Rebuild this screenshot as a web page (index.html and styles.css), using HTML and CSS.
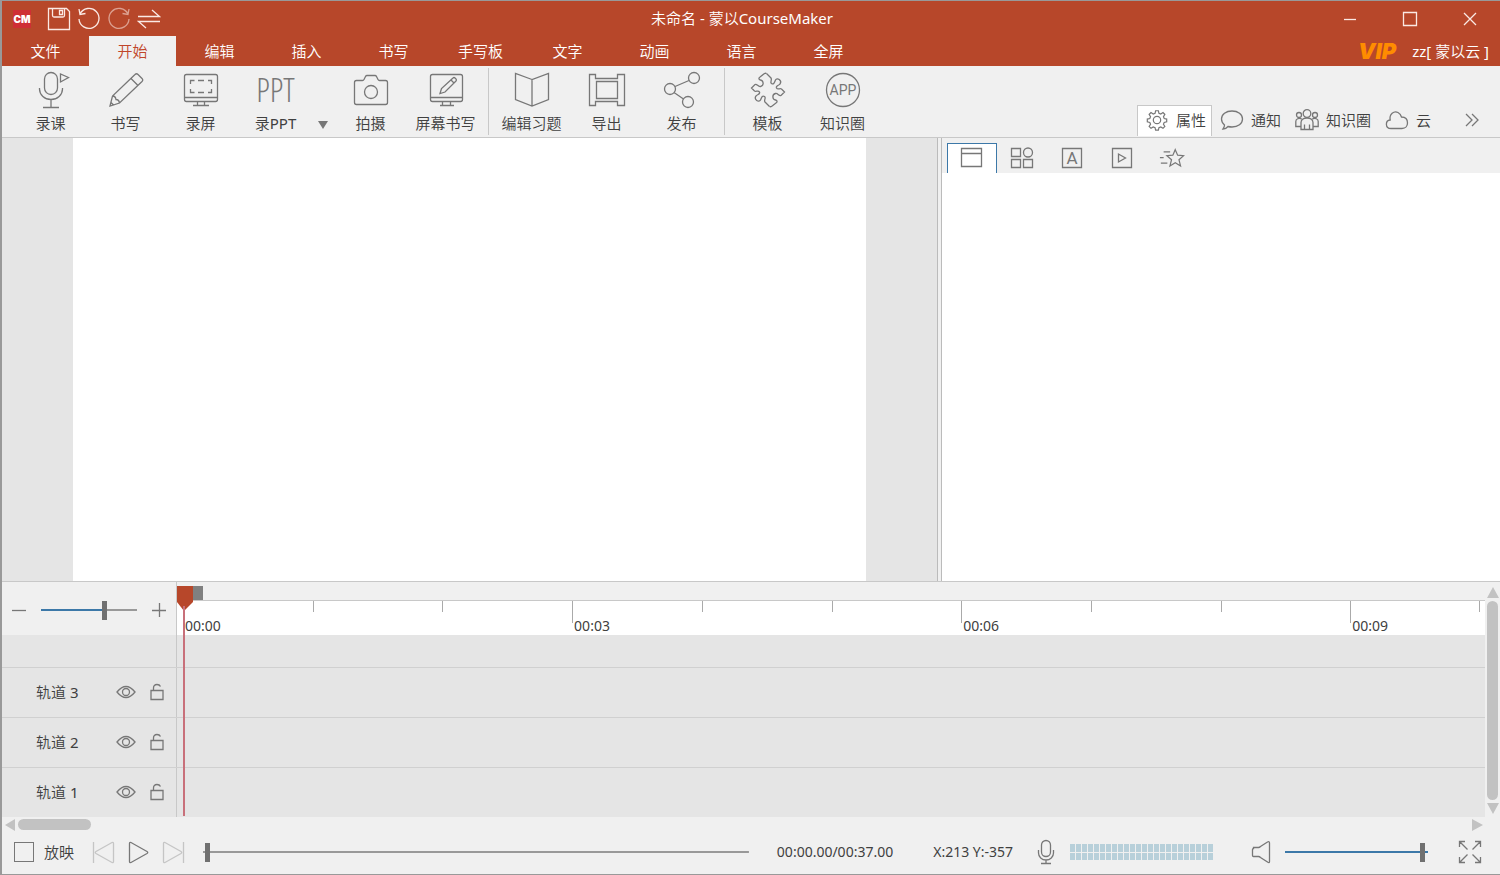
FILE: index.html
```html
<!DOCTYPE html>
<html lang="zh-CN">
<head>
<meta charset="utf-8">
<title>未命名 - 蒙以CourseMaker</title>
<link rel="stylesheet" href="styles.css">
</head>
<body>
<div class="app">
  <header class="titlebar">
    <div class="quick">
      <span class="logo">CM</span>
      <button aria-label="保存"><svg width="24" height="24" viewBox="0 0 24 24"><path d="M1.500 1.500h18l3 3v18h-21zM5.500 1.500v7q0 1.500 1.500 1.500h9q1.500 0 1.500-1.500v-7M12.500 3.500h3v4h-3z"/></svg></button>
      <button aria-label="撤销"><svg width="24" height="24" viewBox="0 0 24 24"><path d="M3 7a10 10 0 1 1-1 5M2 2l1 5.500 5.500-1"/></svg></button>
      <button aria-label="重做" class="dim"><svg width="24" height="24" viewBox="0 0 24 24"><path d="M21 7a10 10 0 1 0 1 5M22 2l-1 5.500-5.500-1"/></svg></button>
      <button aria-label="切换"><svg width="24" height="24" viewBox="0 0 24 24"><path d="M1 9.500h21.500L15 3M23 14.500H1.500L9 21"/></svg></button>
    </div>
    <h1 class="title">未命名 - 蒙以CourseMaker</h1>
    <div class="winctl">
      <button aria-label="最小化"><svg width="16" height="16" viewBox="0 0 16 16"><path d="M2 8.500h12"/></svg></button>
      <button aria-label="最大化"><svg width="16" height="16" viewBox="0 0 16 16"><path d="M1.500 1.500h13v13h-13z"/></svg></button>
      <button aria-label="关闭"><svg width="16" height="16" viewBox="0 0 16 16"><path d="M2 2l12 12M14 2L2 14"/></svg></button>
    </div>
  </header>
  <nav class="menu">
    <button>文件</button><button class="active">开始</button><button>编辑</button><button>插入</button><button>书写</button><button>手写板</button><button>文字</button><button>动画</button><button>语言</button><button>全屏</button>
    <div class="account"><span class="vip">VIP</span><a href="#account">zz[ 蒙以云 ]</a></div>
  </nav>
  <div class="ribbon">
    <div class="tools">
      <button class="tool"><svg width="40" height="40" viewBox="0 0 40 40"><rect x="13.500" y="2.500" width="13" height="22" rx="6.500"/><path d="M8.500 18v1a11.500 10.500 0 0 0 23 0v-1M20 29.500v8M12 37.500h16M29.500 4v8l8-4.500z"/></svg>录课</button>
      <button class="tool"><svg width="40" height="40" viewBox="0 0 40 40"><path d="M4 36l2.500-10L29 4.500q1.500-1.500 3 0l4 4q1.500 1.500 0 3L13.500 33zM25 8.500l7 7M6.500 26q3 0 3.500 3.500q3 0 3.500 3.500M4 36l3.500-1-2.500-2.500"/></svg>书写</button>
      <button class="tool"><svg width="40" height="40" viewBox="0 0 40 40"><rect x="3.500" y="4.500" width="33" height="27" rx="2"/><path d="M3.500 27.500h33M16.500 31.500v3.500M23.500 31.500v3.500M12 35.500h16M9.500 14v-3.500h4M17 10.500h6M27 10.500h3.500V14M9.500 19v3.500h4M17 22.500h6M27 22.500h3.500V19"/></svg>录屏</button>
      <button class="tool"><span class="ppt" aria-hidden="true">PPT</span>录PPT</button>
      <button class="drop" aria-label="录PPT选项"><svg width="10" height="8" viewBox="0 0 10 8"><path d="M0 0h10L5 8z"/></svg></button>
      <button class="tool"><svg width="40" height="40" viewBox="0 0 40 40"><path d="M5.500 10.500h6q1 0 1.500-1l1.500-3q.5-1 1.500-1h8q1 0 1.500 1l1.500 3q.5 1 1.500 1h6q2 0 2 2v20q0 2-2 2h-29q-2 0-2-2v-20q0-2 2-2z"/><circle cx="20" cy="22" r="6.500"/></svg>拍摄</button>
      <button class="tool"><svg width="40" height="40" viewBox="0 0 40 40"><rect x="4.500" y="4.500" width="32" height="27" rx="2"/><path d="M4.500 27.500h32M16.500 31.500v3.500M24.500 31.500v3.500M14 35.500h14M14 23.500l1.500-5L27 8q1-1 2 0l1 1q1 1 0 2L19 22zM25 10l3 3"/></svg>屏幕书写</button>
      <span class="sep"></span>
      <button class="tool"><svg width="40" height="40" viewBox="0 0 40 40"><path d="M20 9.500L3.500 3.500v26L20 36l16.500-6.500v-26zV36"/></svg>编辑习题</button>
      <button class="tool"><svg width="40" height="40" viewBox="0 0 40 40"><path d="M2.500 4.500h6v4h22v-4h7v31h-7v-4h-22v4h-6z"/><path d="M9.500 11.500h21v17h-21z"/></svg>导出</button>
      <button class="tool"><svg width="40" height="40" viewBox="0 0 40 40"><circle cx="8" cy="19" r="5.500"/><circle cx="32" cy="8" r="5.500"/><circle cx="26" cy="32" r="5.500"/><path d="M13 16.500l14-6M12 22.500l9.500 6.500"/></svg>发布</button>
      <span class="sep"></span>
      <button class="tool"><svg width="40" height="40" viewBox="0 0 40 40"><path d="M18.500 3.500l4.500 4.500c1.500 2-1.500 4 .5 5.500c2.500 1.500 3-1.500 4-3.500c1.500-3 7 .5 4.500 4c-1 1.500-4.500 1.500-3.500 4c1 2 3.500 0 5 1l3 3l-3.500 3.500c-2 1-3-2.500-5.500-2c-4 1-3 6 0 6.500c2 .5 2 2 .5 3l-4.500 3.500q-1 .5-2 0"/><path transform="rotate(180 20 20)" d="M18.500 3.500l4.500 4.500c1.500 2-1.500 4 .5 5.500c2.500 1.500 3-1.500 4-3.500c1.500-3 7 .5 4.500 4c-1 1.500-4.500 1.500-3.500 4c1 2 3.500 0 5 1l3 3l-3.500 3.500c-2 1-3-2.500-5.500-2c-4 1-3 6 0 6.500c2 .5 2 2 .5 3l-4.500 3.500q-1 .5-2 0"/></svg>模板</button>
      <button class="tool"><svg width="40" height="40" viewBox="0 0 40 40"><circle cx="20" cy="20" r="16.500"/><text x="20" y="25" text-anchor="middle">APP</text></svg>知识圈</button>
    </div>
    <div class="panes">
      <button class="active"><svg width="24" height="24" viewBox="-1 -1 26 26"><circle cx="12" cy="12" r="4"/><path d="M10.500 2h3l.6 2.700 2 .8L18.500 4l2 2-1.500 2.400.8 2 2.700.6v3l-2.700.6-.8 2 1.500 2.400-2 2-2.400-1.500-2 .8-.6 2.700h-3l-.6-2.700-2-.8L5.500 21l-2-2L5 16.600l-.8-2-2.700-.6v-3l2.700-.6.8-2L3.500 6l2-2 2.400 1.500 2-.8z"/></svg>属性</button>
      <button><svg width="24" height="24" viewBox="0 0 24 24"><path d="M12 3c6 0 10.500 3.300 10.500 8S18 19 12 19q-2 0-4-.5-2 2.500-5 2.500 1.500-2 1.500-4-3-2.500-3-6C1.500 6.300 6 3 12 3z"/></svg>通知</button>
      <button><svg width="24" height="24" viewBox="0 0 24 24"><circle cx="12" cy="5.500" r="3.800"/><circle cx="4" cy="7" r="2.500"/><circle cx="20" cy="7" r="2.500"/><path d="M6 21.500v-7c0-3 3-4.500 6-4.500s6 1.500 6 4.500v7zM9.500 16.500v5M14.500 16.500v5M6 18.500H.8v-5c0-2.500 3-4 6-2.500M18 18.500h5.200v-5c0-2.500-3-4-6-2.500"/></svg>知识圈</button>
      <button><svg width="24" height="24" viewBox="0 0 24 24"><path d="M6 20.500c-6 0-6-8-.8-8.500C4 6 9 2.500 13 4.500c2 1 3 2.500 3.500 4.500C21 9 22.500 12 22.500 15s-2 5.500-5.500 5.500z"/></svg>云</button>
      <button class="more" aria-label="更多"><svg width="16" height="16" viewBox="0 0 16 16"><path d="M2 2l6 6-6 6M8 2l6 6-6 6"/></svg></button>
    </div>
  </div>
  <main class="work">
    <section class="stage" aria-label="画布"><div class="page"></div></section>
    <div class="splitter"></div>
    <aside class="props">
      <div class="proptabs">
        <button class="active" aria-label="页面"><svg width="24" height="24" viewBox="0 0 24 24"><path d="M1.500 2.500h20v18h-20zM1.500 7.500h20"/></svg></button>
        <button aria-label="组件"><svg width="24" height="24" viewBox="0 0 24 24"><path d="M1.500 2.500h9v8h-9zM1.500 13.500h9v8h-9zM13.500 13.500h9v8h-9z"/><circle cx="18" cy="6.500" r="4.500"/></svg></button>
        <button aria-label="文字"><svg width="24" height="24" viewBox="0 0 24 24"><path d="M2.500 2.500h19v19h-19z"/><text x="12" y="18" text-anchor="middle" class="glyph">A</text></svg></button>
        <button aria-label="媒体"><svg width="24" height="24" viewBox="0 0 24 24"><path d="M2.500 2.500h19v19h-19zM8.500 8v8l7-4z"/></svg></button>
        <button aria-label="动效"><svg width="26" height="24" viewBox="0 0 28 24"><path d="M17.500 3l2.600 6 6.400.5-5 4.300 1.700 6.700-5.700-3.500-5.700 3.500 1.700-6.700-5-4.300 6.400-.5zM5 5.500h7M1 11.500h4M2 17.500h7"/></svg></button>
      </div>
      <div class="propbody"></div>
    </aside>
  </main>
  <section class="timeline" aria-label="时间轴">
    <div class="lanes">
      <div class="row head">
        <div class="zoomer">
          <button aria-label="缩小"><svg width="14" height="14" viewBox="0 0 14 14"><path d="M0 7.500h14"/></svg></button>
          <input type="range" class="slider" aria-label="缩放" min="0" max="100" value="67" style="--fill:67%">
          <button aria-label="放大"><svg width="14" height="14" viewBox="0 0 14 14"><path d="M0 7.500h14M7.500 0v14"/></svg></button>
        </div>
        <div class="ruler"><div class="scale">
          <span class="cell origin">00:00</span><span class="cell"></span><span class="cell"></span>
          <span class="cell major">00:03</span><span class="cell"></span><span class="cell"></span>
          <span class="cell major">00:06</span><span class="cell"></span><span class="cell"></span>
          <span class="cell major last">00:09</span>
        </div></div>
      </div>
      <div class="row blank"><div class="label"></div><div class="lane"></div></div>
      <div class="row"><div class="label"><span>轨道 3</span><button aria-label="显示轨道 3"><svg width="20" height="14" viewBox="0 0 20 14"><path d="M1 7q9-11 18 0q-9 11-18 0z"/><circle cx="10" cy="7" r="3.500"/></svg></button><button aria-label="锁定轨道 3"><svg width="14" height="18" viewBox="0 0 14 18"><path d="M1 7.500h12v9H1zM3.500 7.500V5q0-3.500 3.500-3.500 2.500 0 3.500 2"/></svg></button></div><div class="lane"></div></div>
      <div class="row"><div class="label"><span>轨道 2</span><button aria-label="显示轨道 2"><svg width="20" height="14" viewBox="0 0 20 14"><path d="M1 7q9-11 18 0q-9 11-18 0z"/><circle cx="10" cy="7" r="3.500"/></svg></button><button aria-label="锁定轨道 2"><svg width="14" height="18" viewBox="0 0 14 18"><path d="M1 7.500h12v9H1zM3.500 7.500V5q0-3.500 3.500-3.500 2.500 0 3.500 2"/></svg></button></div><div class="lane"></div></div>
      <div class="row final"><div class="label"><span>轨道 1</span><button aria-label="显示轨道 1"><svg width="20" height="14" viewBox="0 0 20 14"><path d="M1 7q9-11 18 0q-9 11-18 0z"/><circle cx="10" cy="7" r="3.500"/></svg></button><button aria-label="锁定轨道 1"><svg width="14" height="18" viewBox="0 0 14 18"><path d="M1 7.500h12v9H1zM3.500 7.500V5q0-3.500 3.500-3.500 2.500 0 3.500 2"/></svg></button></div><div class="lane"></div></div>
      <div class="playhead"><svg width="26" height="26" viewBox="0 0 26 26"><path class="end" d="M16 0h10v14H16z"/><path class="now" d="M0 0h16v16l-9 9-7-9z"/></svg></div>
    </div>
    <div class="vscroll"><i class="up"></i><span class="thumb"></span><i class="down"></i></div>
  </section>
  <div class="hscroll"><i class="left"></i><span class="thumb"></span><i class="right"></i></div>
  <footer class="player">
    <label class="show"><input type="checkbox">放映</label>
    <div class="transport">
      <button aria-label="上一个" class="off"><svg width="24" height="24" viewBox="0 0 24 24"><path d="M2.500 2v21M22.500 3.500v18q0 1.500-1.500 1L5 13.500q-1.500-1 0-2l16-9q1.500-.5 1.500 1z"/></svg></button>
      <button aria-label="播放"><svg width="24" height="24" viewBox="0 0 24 24"><path d="M3.500 3.500v18q0 1.500 1.500 1l16-9q1.500-1 0-2L5 2.500q-1.500-.5-1.500 1z"/></svg></button>
      <button aria-label="下一个" class="off"><svg width="24" height="24" viewBox="0 0 24 24"><path d="M22.500 2v21M2.500 3.500v18q0 1.500 1.500 1l16-9q1.500-1 0-2L4 2.500q-1.500-.5-1.500 1z"/></svg></button>
    </div>
    <input type="range" class="slider seek" aria-label="播放进度" min="0" max="100" value="0" style="--fill:0%">
    <span class="time">00:00.00/00:37.00</span>
    <span class="coords">X:213 Y:-357</span>
    <button aria-label="麦克风"><svg width="18" height="26" viewBox="0 0 18 26"><rect x="4.500" y="1.500" width="9" height="16" rx="4.500"/><path d="M1.500 11v3a7.500 7 0 0 0 15 0v-3M9 21v3.500M4 24.500h10"/></svg></button>
    <div class="meter" role="img" aria-label="音量电平"></div>
    <button class="speaker" aria-label="静音"><svg width="20" height="24" viewBox="0 0 20 24"><path d="M2.500 7.500h5q1 0 2-1l7-4.500q2-1 2 1v18.500q0 2-2 .5l-7-4.500q-1-1-2-1h-5q-1 0-1-1v-6q0-1 1-1z"/></svg></button>
    <input type="range" class="slider volume" aria-label="音量" min="0" max="100" value="98" style="--fill:100%">
    <button aria-label="全屏显示"><svg width="24" height="24" viewBox="0 0 24 24"><path d="M1.500 7V1.500H7M1.500 1.500l8 8M17 1.500h5.500V7M22.500 1.500l-8 8M1.500 17v5.500H7M1.500 22.500l8-8M17 22.500h5.500V17M22.500 22.500l-8-8"/></svg></button>
  </footer>
</div>
</body>
</html>
```
FILE: styles.css
```css
* { box-sizing: border-box; }
body { margin: 0; background: #fff; }
.app {
  --red: #b7472a;
  --bg: #f0f0f0;
  --line: #c8c8c8;
  --blue: #3c78a8;
  --ink: #777;
  display: flex; flex-direction: column; min-height: 100vh;
  border: 1px solid #999; border-left-width: 2px; border-right: 0;
  background: var(--bg); color: #404040;
  font: 400 15px/20px "Noto Sans", "Noto Sans CJK SC DemiLight", "Noto Sans CJK SC", sans-serif;
}
button {
  display: flex; align-items: center; justify-content: center;
  margin: 0; padding: 0; border: 0; background: none; color: inherit; font: inherit;
  white-space: nowrap;
}
svg { display: block; flex: none; fill: none; stroke: var(--ink); stroke-width: 1.3; }
svg text { fill: var(--ink); stroke: none; font: 400 14px Roboto, sans-serif; }
svg .glyph { font-size: 17px; }

.titlebar { display: grid; grid-template-columns: 1fr auto 1fr; align-items: center; height: 35px; background: var(--red); color: #fff; }
.titlebar svg { stroke: #fbe9e4; }
.quick { display: flex; align-items: center; gap: 6px; padding-left: 11px; }
.logo { width: 18px; height: 18px; margin-right: 10px; background: #cf2f35; font: 900 10px/18px Inter, sans-serif; text-align: center; }
.dim { opacity: .55; }
.title { margin: 0; padding: 0 18px 2px 0; font-size: 15px; font-weight: 400; }
.winctl { display: flex; justify-content: flex-end; }
.winctl button { width: 60px; height: 35px; }

.menu { display: flex; height: 30px; background: var(--red); color: #fff; }
.menu > button { width: 87px; }
.menu .active { background: var(--bg); color: #c0452a; }
.account { display: flex; align-items: center; gap: 16px; margin-left: auto; padding-right: 11px; }
.account a { color: inherit; text-decoration: none; }
.vip { color: #ff8c00; font: italic 900 22px/20px Inter, sans-serif; }

.ribbon { display: flex; justify-content: space-between; height: 72px; border-bottom: 1px solid var(--line); }
.tools { display: flex; padding-left: 11px; }
.tool { flex-direction: column; justify-content: flex-start; gap: 3px; width: 75px; padding-top: 4px; }
.ppt { height: 40px; color: var(--ink); font: 300 33px/40px "Open Sans Condensed Light", "Roboto Condensed Light", "Roboto Condensed", Roboto, sans-serif; }
.drop { width: 20px; align-items: flex-end; padding-bottom: 8px; }
.drop svg { fill: var(--ink); stroke: none; }
.sep { width: 1px; margin: 2px 5px; background: var(--line); }
.panes { display: flex; align-items: flex-end; padding-right: 19px; }
.panes button { gap: 7px; height: 31px; margin-bottom: 1px; padding: 0 5px 2px 7px; border: 1px solid transparent; border-bottom: 0; }
.panes .active { border-color: var(--line); background: #fff; }
.panes .more { margin-left: 26px; padding: 0 0 2px; }

.work { display: grid; grid-template-columns: 935fr 5px 558fr; flex: 1; min-height: 200px; }
.stage { display: flex; padding: 0 71px; background: #e5e5e5; }
.page { flex: 1; background: #fff; }
.splitter { border: solid #bbb; border-width: 0 1px; }
.props { display: flex; flex-direction: column; }
.proptabs { display: flex; height: 35px; padding: 5px 5px 0; }
.proptabs button { width: 50px; padding-bottom: 2px; border: 1px solid transparent; border-bottom: 0; }
.proptabs .active { border-color: var(--blue); background: #fff; }
.propbody { flex: 1; background: #fff; }

.timeline { display: flex; border-top: 1px solid var(--line); }
.lanes { position: relative; flex: 1; }
.row { display: flex; height: 50px; border-bottom: 1px solid #d0d0d0; background: #e5e5e5; }
.row.head { height: 53px; border: 0; background: var(--bg); }
.row.blank { height: 33px; }
.row.final { height: 49px; border: 0; }
.label, .zoomer { display: flex; align-items: center; width: 175px; border-right: 1px solid var(--line); }
.label { gap: 14px; padding: 0 12px 2px 34px; }
.label span { flex: 1; }
.label button { height: 20px; }
.lane { flex: 1; }
.zoomer { gap: 15px; padding: 3px 10px 0; }
.zoomer .slider { flex: 1; }
.ruler { flex: 1; padding-top: 18px; }
.scale { display: flex; height: 35px; padding: 0 5px 0 6px; border-top: 1px solid var(--line); background: #fff; }
.cell { position: relative; flex: 1 1 0; padding: 15px 0 0 2px; font-size: 14px; line-height: 20px; }
.cell::before, .last::after { content: ""; position: absolute; top: 0; left: 0; width: 1px; height: 11px; background: #aaa; }
.major::before { height: 22px; }
.last::after { left: auto; right: 0; }
.playhead { position: absolute; top: 4px; bottom: 1px; left: 175px; width: 26px; }
.playhead::after { content: ""; position: absolute; top: 20px; bottom: 0; left: 6px; width: 2px; background: #c8707a; }
.playhead svg { stroke: none; }
.now { fill: var(--red); }
.end { fill: #808080; }

.vscroll { display: flex; flex-direction: column; align-items: center; gap: 3px; width: 15px; padding: 5px 0 3px; }
.thumb { border-radius: 6px; background: #c2c2c2; }
.vscroll .thumb { flex: 1; width: 11px; }
.hscroll .thumb { width: 73px; height: 11px; margin: 0 auto 0 3px; }
.hscroll { display: flex; align-items: center; height: 15px; padding: 0 17px 0 3px; }
.up, .down, .left, .right { border: 6px solid transparent; }
.up { border-top: 0; border-bottom: 11px solid #c2c2c2; }
.down { border-bottom: 0; border-top: 11px solid #c2c2c2; }
.left { border-left: 0; border-right: 10px solid #c2c2c2; }
.right { border-right: 0; border-left: 11px solid #c2c2c2; }

.player { display: flex; align-items: center; height: 42px; padding: 0 18px 2px 12px; }
.show { display: flex; align-items: center; gap: 10px; }
.show input { appearance: none; width: 20px; height: 20px; margin: 0; border: 1px solid #777; }
.transport { display: flex; gap: 11px; margin: 0 18px 0 17px; }
.off { opacity: .35; }
.slider { appearance: none; min-width: 0; height: 20px; margin: 0; background: linear-gradient(to right, var(--blue) var(--fill), #999 var(--fill)) center / 100% 2px no-repeat; }
.slider::-webkit-slider-thumb { appearance: none; width: 5px; height: 19px; background: #707070; }
.seek { flex: 1; padding: 0 2px; }
.time, .coords { font-size: 14px; }
.time { margin: 0 40px 0 28px; }
.coords { margin-right: 24px; }
.meter {
  width: 143px; height: 16px; margin: 0 38px 0 15px;
  background: linear-gradient(var(--bg), var(--bg)) 0 8px / 100% 1px no-repeat, repeating-linear-gradient(to right, #b8d0da 0 5px, var(--bg) 5px 6px);
}
.volume { width: 143px; margin: 0 30px 0 14px; }
```
